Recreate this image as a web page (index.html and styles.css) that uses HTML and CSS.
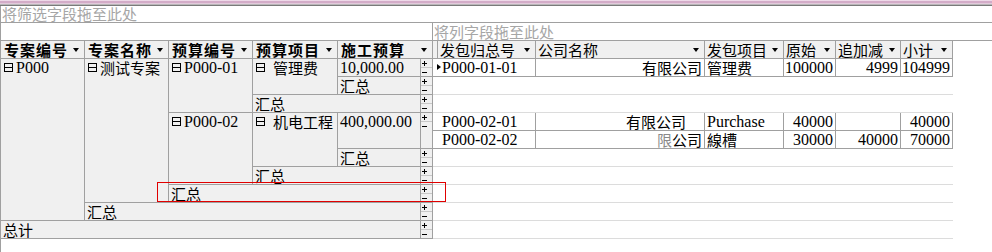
FILE: index.html
```html
<!DOCTYPE html>
<html lang="zh">
<head>
<meta charset="utf-8">
<title>数据透视表</title>
<link rel="stylesheet" href="styles.css">
</head>
<body>
<div class="pivot">
  <div class="topbar"></div>
  <div class="filter-zone">将筛选字段拖至此处</div>
  <div class="col-zone">
    <div class="row-drop"></div>
    <div class="col-drop">将列字段拖至此处</div>
  </div>
  <div class="body">
    <table class="grid">
      <colgroup>
        <col class="c84"><col class="c84"><col class="c84"><col class="c85"><col class="c83"><col class="c12">
        <col class="c5"><col class="c98"><col class="c169"><col class="c79"><col class="c52"><col class="c65"><col class="c52">
      </colgroup>
      <tr class="hdr">
        <th class="rh"><div class="hc"><span>专案编号</span><i class="dd"></i></div></th>
        <th class="rh"><div class="hc"><span>专案名称</span><i class="dd"></i></div></th>
        <th class="rh"><div class="hc"><span>预算编号</span><i class="dd"></i></div></th>
        <th class="rh"><div class="hc"><span>预算项目</span><i class="dd"></i></div></th>
        <th class="rh" colspan="2"><div class="hc"><span>施工预算</span><i class="dd"></i></div></th>
        <th class="gap"></th>
        <th class="dh"><div class="hc"><span>发包归总号</span><i class="dd"></i></div></th>
        <th class="dh"><div class="hc"><span>公司名称</span><i class="dd"></i></div></th>
        <th class="dh"><div class="hc"><span>发包项目</span><i class="dd"></i></div></th>
        <th class="dh"><div class="hc"><span>原始</span><i class="dd"></i></div></th>
        <th class="dh"><div class="hc"><span>追加减</span><i class="dd"></i></div></th>
        <th class="dh"><div class="hc"><span>小计</span><i class="dd"></i></div></th>
      </tr>
      <tr>
        <td class="rc" rowspan="9"><i class="ex"></i><span class="n">P000</span></td>
        <td class="rc" rowspan="8"><i class="ex"></i>测试专案</td>
        <td class="rc" rowspan="3"><i class="ex"></i><span class="n">P000-01</span></td>
        <td class="rc" rowspan="2"><i class="ex wide"></i>管理费</td>
        <td class="rc"><span class="n">10,000.00</span></td>
        <td class="pm"><svg width="11" height="17" viewBox="0 0 11 17"><path d="M1 4.5h5M3.5 2v5M1 13.5h5" stroke="#000"/><path d="M0 8.5h11" stroke="#c8c8c8"/></svg></td>
        <td class="dc first" colspan="2"><i class="cur"></i><span class="n">P000-01-01</span></td>
        <td class="dc r">有限公司</td>
        <td class="dc">管理费</td>
        <td class="dc r n">100000</td>
        <td class="dc r n">4999</td>
        <td class="dc r n">104999</td>
      </tr>
      <tr>
        <td class="rc">汇总</td>
        <td class="pm"><svg width="11" height="17" viewBox="0 0 11 17"><path d="M1 4.5h5M3.5 2v5M1 13.5h5" stroke="#000"/><path d="M0 8.5h11" stroke="#c8c8c8"/></svg></td>
        <td class="blank" colspan="7"></td>
      </tr>
      <tr>
        <td class="rc" colspan="2">汇总</td>
        <td class="pm"><svg width="11" height="17" viewBox="0 0 11 17"><path d="M1 4.5h5M3.5 2v5M1 13.5h5" stroke="#000"/><path d="M0 8.5h11" stroke="#c8c8c8"/></svg></td>
        <td class="blank" colspan="7"></td>
      </tr>
      <tr>
        <td class="rc" rowspan="4"><i class="ex"></i><span class="n">P000-02</span></td>
        <td class="rc" rowspan="3"><i class="ex wide"></i>机电工程</td>
        <td class="rc" rowspan="2"><span class="n">400,000.00</span></td>
        <td class="pm" rowspan="2"><svg width="11" height="17" viewBox="0 0 11 17"><path d="M1 4.5h5M3.5 2v5M1 13.5h5" stroke="#000"/><path d="M0 8.5h11" stroke="#c8c8c8"/></svg></td>
        <td class="dc first" colspan="2"><span class="n">P000-02-01</span></td>
        <td class="dc r co2">有限公司</td>
        <td class="dc n">Purchase</td>
        <td class="dc r n">40000</td>
        <td class="dc r n"></td>
        <td class="dc r n">40000</td>
      </tr>
      <tr>
        <td class="dc first" colspan="2"><span class="n">P000-02-02</span></td>
        <td class="dc r"><span class="ghost">限</span>公司</td>
        <td class="dc">線槽</td>
        <td class="dc r n">30000</td>
        <td class="dc r n">40000</td>
        <td class="dc r n">70000</td>
      </tr>
      <tr>
        <td class="rc">汇总</td>
        <td class="pm"><svg width="11" height="17" viewBox="0 0 11 17"><path d="M1 4.5h5M3.5 2v5M1 13.5h5" stroke="#000"/><path d="M0 8.5h11" stroke="#c8c8c8"/></svg></td>
        <td class="blank" colspan="7"></td>
      </tr>
      <tr>
        <td class="rc" colspan="2">汇总</td>
        <td class="pm"><svg width="11" height="17" viewBox="0 0 11 17"><path d="M1 4.5h5M3.5 2v5M1 13.5h5" stroke="#000"/><path d="M0 8.5h11" stroke="#c8c8c8"/></svg></td>
        <td class="blank" colspan="7"></td>
      </tr>
      <tr>
        <td class="rc" colspan="3">汇总</td>
        <td class="pm"><svg width="11" height="17" viewBox="0 0 11 17"><path d="M1 4.5h5M3.5 2v5M1 13.5h5" stroke="#000"/><path d="M0 8.5h11" stroke="#c8c8c8"/></svg></td>
        <td class="blank" colspan="7"></td>
      </tr>
      <tr>
        <td class="rc" colspan="4">汇总</td>
        <td class="pm"><svg width="11" height="17" viewBox="0 0 11 17"><path d="M1 4.5h5M3.5 2v5M1 13.5h5" stroke="#000"/><path d="M0 8.5h11" stroke="#c8c8c8"/></svg></td>
        <td class="blank" colspan="7"></td>
      </tr>
      <tr>
        <td class="rc" colspan="5">总计</td>
        <td class="pm"><svg width="11" height="17" viewBox="0 0 11 17"><path d="M1 4.5h5M3.5 2v5M1 13.5h5" stroke="#000"/><path d="M0 8.5h11" stroke="#c8c8c8"/></svg></td>
        <td class="blank" colspan="7"></td>
      </tr>
    </table>
  </div>
  <div class="selection"></div>
</div>
</body>
</html>
```
FILE: styles.css
```css
* { box-sizing: border-box; }
html, body { margin: 0; padding: 0; background: #fff; }
body {
  font-family: "Noto Sans CJK SC", "Noto Sans", sans-serif;
  font-size: 15px;
  color: #000;
}
.pivot {
  position: relative;
  width: 992px;
  height: 252px;
  display: flex;
  flex-direction: column;
  overflow: hidden;
}
.topbar {
  height: 6px;
  flex: none;
  background: linear-gradient(to bottom,
    #eed9e8 0, #eed9e8 1px,
    #d3acc8 1px, #d3acc8 3px,
    #e2c9db 3px, #e2c9db 4px,
    #b8b8b8 4px, #b8b8b8 5px,
    #7a7a7a 5px, #7a7a7a 6px);
}
.filter-zone {
  flex: none;
  height: 17px;
  border-left: 1px solid #a0a0a0;
  border-bottom: 1px solid #a0a0a0;
  padding-left: 1px;
  font-size: 15px;
  line-height: 16px;
  color: #a6a6a6;
  white-space: nowrap;
}
.col-zone {
  flex: none;
  height: 18px;
  display: flex;
  border-left: 1px solid #a0a0a0;
  border-bottom: 1px solid #a0a0a0;
}
.row-drop { width: 431px; flex: none; }
.col-drop {
  flex: 1;
  border-left: 1px solid #a0a0a0;
  padding-left: 1px;
  font-size: 15px;
  line-height: 17px;
  color: #a6a6a6;
  white-space: nowrap;
}
.body {
  flex: 1;
  border-left: 1px solid #a0a0a0;
}
.grid {
  border-collapse: separate;
  border-spacing: 0;
  table-layout: fixed;
  width: 952px;
}
.c84 { width: 84px; }
.c85 { width: 85px; }
.c83 { width: 83px; }
.c12 { width: 12px; }
.c5 { width: 5px; }
.c98 { width: 98px; }
.c169 { width: 169px; }
.c79 { width: 79px; }
.c52 { width: 52px; }
.c65 { width: 65px; }
.grid tr { height: 18px; }
.grid th, .grid td {
  height: 18px;
  padding: 0 0 0 2px;
  border-right: 1px solid #a0a0a0;
  border-bottom: 1px solid #a0a0a0;
  vertical-align: top;
  line-height: 17px;
  white-space: nowrap;
  text-align: left;
  font-weight: normal;
}
.hdr th { background: #f0f0f0; padding: 0 5px 0 3px; }
.hdr th.dh { padding-left: 2px; }
.hdr th.gap { padding: 0; }
.hc {
  display: flex;
  align-items: center;
  justify-content: space-between;
  height: 17px;
}
.hc span { white-space: nowrap; flex: none; line-height: 17px; }
.rh .hc span { font-weight: 700; letter-spacing: 1px; font-size: 15px; }
.dh .hc span { font-size: 15px; }
.dd {
  flex: none;
  width: 0;
  height: 0;
  border-left: 3px solid transparent;
  border-right: 3px solid transparent;
  border-top: 4px solid #000;
}
.rc { background: #f0f0f0; padding-left: 2px; }
.pm { background: #f0f0f0; padding: 0 !important; }
.pm svg { display: block; }
.ex {
  display: inline-block;
  width: 9px;
  height: 9px;
  border: 1px solid #000;
  background: linear-gradient(#000, #000) 0 3px / 100% 1px no-repeat;
  margin: 4px 3px 0 1px;
  vertical-align: top;
}
.ex.wide { margin-right: 8px; }
.n {
  font-family: "Liberation Serif", serif;
  font-size: 16px;
  line-height: 17px;
  vertical-align: top;
}
td.n { vertical-align: top; }
.dc { background: #fff; }
.dc.r { text-align: right; padding: 0 2px 0 0; }
.dc.first { padding-left: 9px; }
.dc.co2 { padding-right: 18px; }
.cur {
  display: inline-block;
  width: 0;
  height: 0;
  border-top: 3.5px solid transparent;
  border-bottom: 3.5px solid transparent;
  border-left: 4px solid #000;
  margin: 5px 1px 0 -5px;
  vertical-align: top;
}
.ghost { color: #8a8a8a; }
.blank {
  background: #fff;
  border-right: none !important;
  border-bottom: 1px solid #dcdcdc !important;
}
.selection {
  position: absolute;
  left: 157px;
  top: 182px;
  width: 289px;
  height: 20px;
  border: 1px solid #e00000;
  pointer-events: none;
}
```
